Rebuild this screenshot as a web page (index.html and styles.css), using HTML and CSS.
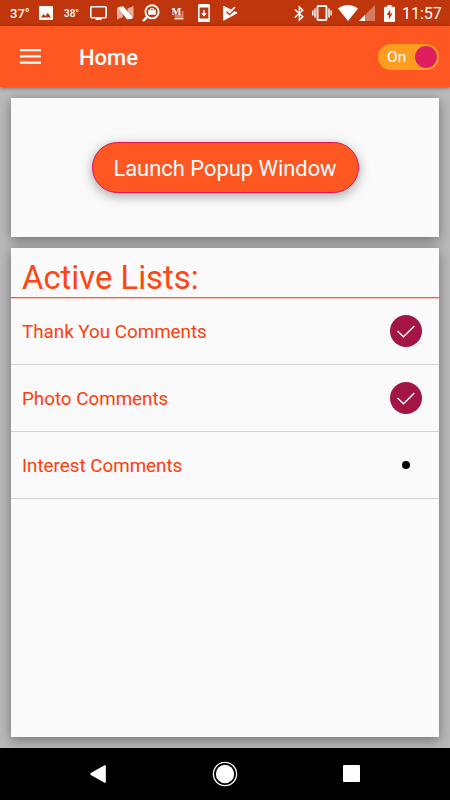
FILE: index.html
```html
<!DOCTYPE html>
<html lang="en">

<head>
    <meta charset="UTF-8">
    <meta name="viewport" content="width=device-width, initial-scale=1.0">
    <title>Home</title>
    <link rel="stylesheet" href="styles.css">
</head>

<body>
    <div class="status-bar">
        <span class="temp">37°</span>
        <svg class="icon-image" width="14" height="14" viewBox="0 0 14 14">
            <path fill="#fff" fill-rule="evenodd" d="M1 0h12a1 1 0 0 1 1 1v12a1 1 0 0 1-1 1H1a1 1 0 0 1-1-1V1a1 1 0 0 1 1-1zM2 11.5h10L8.8 6.8 6.3 10 4.3 8z" />
        </svg>
        <span class="temp small">38°</span>
        <svg class="icon-tv" width="17" height="16" viewBox="0 0 17 16">
            <path fill="none" stroke="#fff" stroke-width="1.6" d="M1.8 1.8h13.4a1 1 0 0 1 1 1v9a1 1 0 0 1-1 1H1.8a1 1 0 0 1-1-1v-9a1 1 0 0 1 1-1z" />
            <path fill="#fff" d="M5.5 13h6v2h-6z" />
        </svg>
        <svg class="icon-n" width="17" height="14" viewBox="0 0 17 14">
            <path fill="#fff" opacity=".6" d="M0 2.5L2 1l4 5v5L0 13.5zM10.5 2.5L16.5 0v11l-2 1.5-4-5z" />
            <path fill="#fff" d="M.8 1.5Q3 .3 6.5.5L16 12.2Q13.5 13.5 10 13.3z" />
        </svg>
        <svg class="icon-search" width="18" height="18" viewBox="0 0 18 18">
            <circle cx="10" cy="7.8" r="6.6" fill="none" stroke="#fff" stroke-width="1.9" />
            <path stroke="#fff" stroke-width="2.4" d="M5.5 12.5L1 17" />
            <path fill="#fff" d="M6.2 5.8h2V4.3h3.6v1.5h2v5H6.2z" />
            <path fill="#bf360c" d="M9.1 5.1h1.8v.7H9.1z" />
        </svg>
        <svg class="icon-m" width="12" height="13" viewBox="0 0 12 13">
            <text class="m-letter" x="-.5" y="7.5">M</text>
            <path fill="#fff" opacity=".75" d="M9.8 4.5h1.5v1.2H9.8zM9.8 6.5h1.5v1.2H9.8zM2.5 8.6h9v1h-9zM2.5 10.5h9v2h-9z" />
        </svg>
        <svg class="icon-download" width="12" height="18" viewBox="0 0 12 18">
            <path fill="#fff" fill-rule="evenodd" d="M1.5 0h9Q12 0 12 1.5v15q0 1.5-1.5 1.5h-9Q0 18 0 16.5v-15Q0 0 1.5 0zM1.6 3.5v11h8.8v-11z" />
            <path fill="#fff" d="M5.2 6h1.6v3.2H9l-3 3.3-3-3.3h2.2z" />
        </svg>
        <svg class="icon-play" width="15" height="16" viewBox="0 0 15 16">
            <path fill="#fff" d="M0 1.5Q0 .5 1 1l13 6.2q.8.6 0 1.2L1.5 15.2Q0 15.8 0 14.5z" />
            <path fill="none" stroke="#bf360c" stroke-width="1.5" d="M3.5 6.5l3 3L13 3.5" />
            <path fill="none" stroke="#fff" stroke-width="1.7" d="M4.5 5.3l2.3 2.1L12 2" />
        </svg>
        <svg class="icon-bluetooth" width="11" height="17" viewBox="0 0 11 17">
            <path fill="none" stroke="#fff" stroke-width="1.5" d="M.8 4.5l8 7.3L5.4 15V2l3.4 3.2-8 7.3" />
        </svg>
        <svg class="icon-vibrate" width="20" height="16" viewBox="0 0 20 16">
            <rect x="5.5" y="1" width="9" height="14" rx="1" fill="none" stroke="#fff" stroke-width="1.9" />
            <path fill="none" stroke="#fff" stroke-width="1.5" d="M3 3.5v9M.8 5.5v5M17 3.5v9M19.2 5.5v5" />
        </svg>
        <svg class="icon-wifi" width="20" height="16" viewBox="0 0 20 16">
            <path fill="#fff" d="M10 16L0 3.5Q4.3 0 10 0t10 3.5z" />
        </svg>
        <svg class="icon-signal" width="16" height="16" viewBox="0 0 16 16">
            <path fill="#fff" opacity=".35" d="M16 0v16H0z" />
            <path fill="#fff" d="M6 10v6H0z" />
        </svg>
        <svg class="icon-battery" width="11" height="17" viewBox="0 0 11 17">
            <path fill="#fff" fill-rule="evenodd" d="M3.5 0h4v1.7H10q1 0 1 1V16q0 1-1 1H1q-1 0-1-1V2.7q0-1 1-1h2.5zM6.3 4.5L2.6 10h2.2v4.5l3.7-6H6.3z" />
        </svg>
        <span class="clock">11:57</span>
    </div>

    <header>
        <svg class="menu" width="21" height="15" viewBox="0 0 21 15">
            <path fill="#fff" d="M0 0h21v2.3H0zM0 6.2h21v2.3H0zM0 12.4h21v2.3H0z" />
        </svg>
        <h1 class="title">Home</h1>
        <div class="switch">
            <span class="switch-label">On</span>
            <span class="switch-knob"></span>
        </div>
    </header>

    <main>
        <section class="card launch">
            <button class="launch-btn">Launch Popup Window</button>
        </section>

        <section class="card lists">
            <h2 class="lists-title">Active Lists:</h2>
            <ul class="list">
                <li class="list-item">
                    <span class="list-name">Thank You Comments</span>
                    <svg class="check" width="32" height="32" viewBox="0 0 32 32">
                        <circle cx="16" cy="16" r="16" fill="#a31545" />
                        <path fill="none" stroke="#fff" stroke-width="1.4" d="M7.5 16l6 5.7L24.3 11" />
                    </svg>
                </li>
                <li class="list-item">
                    <span class="list-name">Photo Comments</span>
                    <svg class="check" width="32" height="32" viewBox="0 0 32 32">
                        <circle cx="16" cy="16" r="16" fill="#a31545" />
                        <path fill="none" stroke="#fff" stroke-width="1.4" d="M7.5 16l6 5.7L24.3 11" />
                    </svg>
                </li>
                <li class="list-item">
                    <span class="list-name">Interest Comments</span>
                    <span class="dot"></span>
                </li>
            </ul>
        </section>
    </main>

    <nav class="nav-bar">
        <svg width="16" height="18" viewBox="0 0 16 18">
            <path fill="#fff" d="M14.5.3Q15.8-.2 15.8 1v16q0 1.2-1.3.7L.8 9.9Q-.2 9 .8 8.1z" />
        </svg>
        <svg width="26" height="26" viewBox="0 0 26 26">
            <circle cx="13" cy="13" r="11.6" fill="none" stroke="#fff" stroke-width="1.3" />
            <circle cx="13" cy="13" r="9.2" fill="#fff" />
        </svg>
        <svg width="17" height="17" viewBox="0 0 17 17">
            <rect width="17" height="17" rx="1" fill="#fff" />
        </svg>
    </nav>
</body>

</html>
```
FILE: styles.css
```css
* {
    box-sizing: border-box;
}

body {
    margin: 0;
    height: 100vh;
    display: flex;
    flex-direction: column;
    overflow: hidden;
    font-family: Roboto, "Liberation Sans", sans-serif;
    background-color: #bababa;
}

svg {
    display: block;
    flex-shrink: 0;
}

/* status bar */
.status-bar {
    height: 26px;
    flex-shrink: 0;
    display: flex;
    align-items: center;
    padding-left: 10px;
    color: #fff;
    background-color: #bf360c;
}

.temp {
    width: 29px;
    font-size: 13px;
    font-weight: 500;
}

.temp.small {
    width: 26px;
    margin-left: 11px;
    font-size: 10px;
}

.icon-n {
    margin-left: 10px;
}

.icon-search {
    margin-left: 8px;
}

.icon-m {
    margin-left: 12px;
}

.m-letter {
    font-family: "Liberation Serif", serif;
    font-size: 10.5px;
    font-weight: bold;
    fill: #fff;
}

.icon-download {
    margin-left: 14px;
}

.icon-play {
    margin-left: 13px;
}

.icon-bluetooth {
    margin-left: 56px;
}

.icon-vibrate {
    margin-left: 7px;
}

.icon-wifi {
    margin-left: 6px;
}

.icon-signal {
    margin-left: 1px;
}

.icon-battery {
    margin-left: 9px;
}

.clock {
    margin: 2px 0 0 7px;
    font-size: 16px;
    line-height: 26px;
}

/* app bar */
header {
    position: relative;
    height: 61px;
    flex-shrink: 0;
    display: flex;
    align-items: center;
    padding: 0 11px 0 20px;
    color: #fff;
    background-color: #ff5722;
    box-shadow: 0 1px 4px rgba(0, 0, 0, 0.45);
}

.title {
    margin: 2px 0 0 38px;
    font-size: 22px;
    font-weight: 500;
}

.switch {
    width: 61px;
    height: 26px;
    margin-left: auto;
    display: flex;
    align-items: center;
    justify-content: space-between;
    padding: 0 2px 0 9px;
    border-radius: 13px;
    background-color: #ff9d20;
}

.switch-label {
    font-size: 15.5px;
}

.switch-knob {
    width: 22px;
    height: 22px;
    border-radius: 50%;
    background-color: #e01e5f;
}

/* content */
main {
    flex: 1;
    display: flex;
    flex-direction: column;
    gap: 11px;
    padding: 11px;
}

.card {
    background-color: #fafafa;
    box-shadow: 0 3px 12px rgba(0, 0, 0, 0.4);
}

.launch {
    height: 139px;
    display: flex;
    align-items: center;
    justify-content: center;
}

.launch-btn {
    width: 267px;
    height: 51px;
    padding: 1px 0 0;
    border: 1px solid #e0105c;
    border-radius: 26px;
    font-family: inherit;
    font-size: 21.9px;
    color: #fff;
    background-color: #ff5722;
    box-shadow: 0 3px 12px rgba(0, 0, 0, 0.35);
}

.lists {
    flex: 1;
}

.lists-title {
    height: 50px;
    margin: 0;
    padding: 5px 11px 0;
    border-bottom: 1px solid #ff5722;
    box-shadow: 0 1px 0 rgba(255, 87, 34, 0.3);
    font-size: 32.8px;
    line-height: 50px;
    font-weight: 400;
    color: #ff4511;
}

.list {
    margin: 0;
    padding: 0;
    list-style: none;
}

.list-item {
    height: 67px;
    display: flex;
    align-items: center;
    justify-content: space-between;
    padding: 0 17px 0 11px;
    border-bottom: 1px solid #d3d3d3;
    font-size: 18.8px;
    color: #ff3d0c;
}

.list-name {
    padding-top: 1px;
}

.dot {
    width: 8px;
    height: 8px;
    margin-right: 12px;
    border-radius: 50%;
    background-color: #000;
}

/* navigation bar */
.nav-bar {
    height: 52px;
    flex-shrink: 0;
    display: flex;
    align-items: center;
    justify-content: space-between;
    padding: 0 90px 1px;
    background-color: #000;
}
```
